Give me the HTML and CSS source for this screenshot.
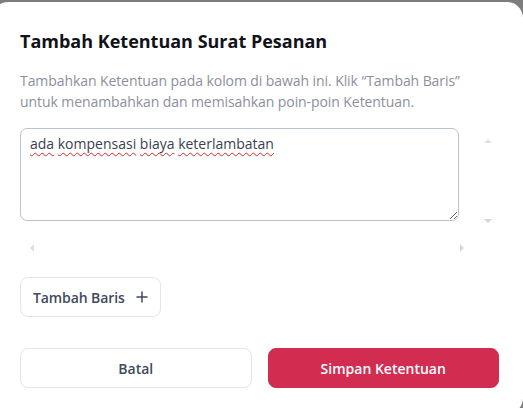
FILE: index.html
```html
<!DOCTYPE html>
<html lang="id">
<head>
<meta charset="utf-8">
<title>Tambah Ketentuan Surat Pesanan</title>
<link rel="stylesheet" href="styles.css">
</head>
<body>
<div class="dialog">
  <h1 class="title">Tambah Ketentuan Surat Pesanan</h1>
  <p class="desc">Tambahkan Ketentuan pada kolom di bawah ini. Klik “Tambah Baris” untuk menambahkan dan memisahkan poin-poin Ketentuan.</p>
  <div class="editor">
    <div class="field"><span class="sp">ada</span> <span class="sp">kompensasi</span> <span class="sp">biaya</span> <span class="sp">keterlambatan</span></div>
    <div class="vscroll">
      <span class="arrow arrow-up"></span>
      <span class="arrow arrow-down"></span>
    </div>
    <div class="hscroll">
      <span class="arrow arrow-left"></span>
      <span class="arrow arrow-right"></span>
    </div>
  </div>
  <button class="btn-add" type="button">Tambah Baris
    <svg class="plus" width="12" height="12" viewBox="0 0 12 12"><path d="M6 0.5V11.5M0.5 6H11.5" stroke="#3e4a5e" stroke-width="1.5" fill="none"/></svg>
  </button>
  <div class="actions">
    <button class="btn btn-cancel" type="button">Batal</button>
    <button class="btn btn-save" type="button">Simpan Ketentuan</button>
  </div>
</div>
</body>
</html>
```

FILE: styles.css
```css
html, body {
  margin: 0;
  padding: 0;
}
body {
  background: #7d7d7d;
  overflow: hidden;
  height: 408px;
  font-family: "Open Sans", "Noto Sans", sans-serif;
}
.dialog {
  box-sizing: border-box;
  margin: 2px 0 0 -8px;
  width: 531px;
  height: 412px;
  background: #fff;
  border-radius: 16px;
  padding: 27px 24px 0 28px;
}
.title {
  margin: 0;
  font-size: 18px;
  line-height: 24px;
  font-weight: 700;
  color: #111318;
}
.desc {
  margin: 17px 0 0;
  font-size: 14px;
  line-height: 21px;
  letter-spacing: -0.08px;
  color: #8b909c;
}
.editor {
  margin-top: 16px;
  display: grid;
  grid-template-columns: 460px 15px;
  grid-template-rows: 105px 15px;
  row-gap: 7px;
}
.field {
  box-sizing: border-box;
  width: 439px;
  height: 93px;
  border: 1px solid #bcc2d0;
  border-radius: 7px;
  padding: 5px 9px;
  font-size: 14px;
  line-height: 19px;
  color: #3a4152;
  resize: vertical;
  overflow: auto;
}
.sp {
  text-decoration: underline wavy #e0262b;
  text-decoration-thickness: 1.3px;
  text-underline-offset: 3px;
  text-decoration-skip-ink: none;
}
.vscroll {
  display: flex;
  flex-direction: column;
  justify-content: space-between;
  align-items: center;
  padding: 11px 0 10px;
  box-sizing: border-box;
}
.hscroll {
  display: flex;
  justify-content: space-between;
  align-items: center;
  padding: 0 16px 0 10px;
}
.arrow {
  width: 0;
  height: 0;
  display: block;
}
.arrow-up {
  border-left: 4.5px solid transparent;
  border-right: 4.5px solid transparent;
  border-bottom: 4.5px solid #e0e0e0;
}
.arrow-down {
  border-left: 4.5px solid transparent;
  border-right: 4.5px solid transparent;
  border-top: 4.5px solid #d4d4d4;
}
.arrow-left {
  border-top: 4.5px solid transparent;
  border-bottom: 4.5px solid transparent;
  border-right: 4.5px solid #e0e0e0;
}
.arrow-right {
  border-top: 4.5px solid transparent;
  border-bottom: 4.5px solid transparent;
  border-left: 4.5px solid #d8d8d8;
}
.btn-add {
  margin-top: 22px;
  display: flex;
  align-items: center;
  gap: 11px;
  height: 40px;
  padding: 0 12px 0 12px;
  background: #fff;
  border: 1px solid #e3e5ea;
  border-radius: 8px;
  font-family: inherit;
  font-size: 14px;
  font-weight: 600;
  letter-spacing: -0.1px;
  color: #3e4a5e;
}
.plus {
  display: block;
}
.actions {
  margin-top: 31px;
  display: flex;
  gap: 16px;
  width: 479px;
}
.btn {
  flex: 1;
  height: 40px;
  border-radius: 8px;
  font-family: inherit;
  font-size: 14px;
  font-weight: 600;
}
.btn-cancel {
  background: #fff;
  border: 1px solid #e3e5ea;
  color: #3e4a5e;
}
.btn-save {
  background: #d32c51;
  border: 1px solid #d32c51;
  color: #fff;
}
```
